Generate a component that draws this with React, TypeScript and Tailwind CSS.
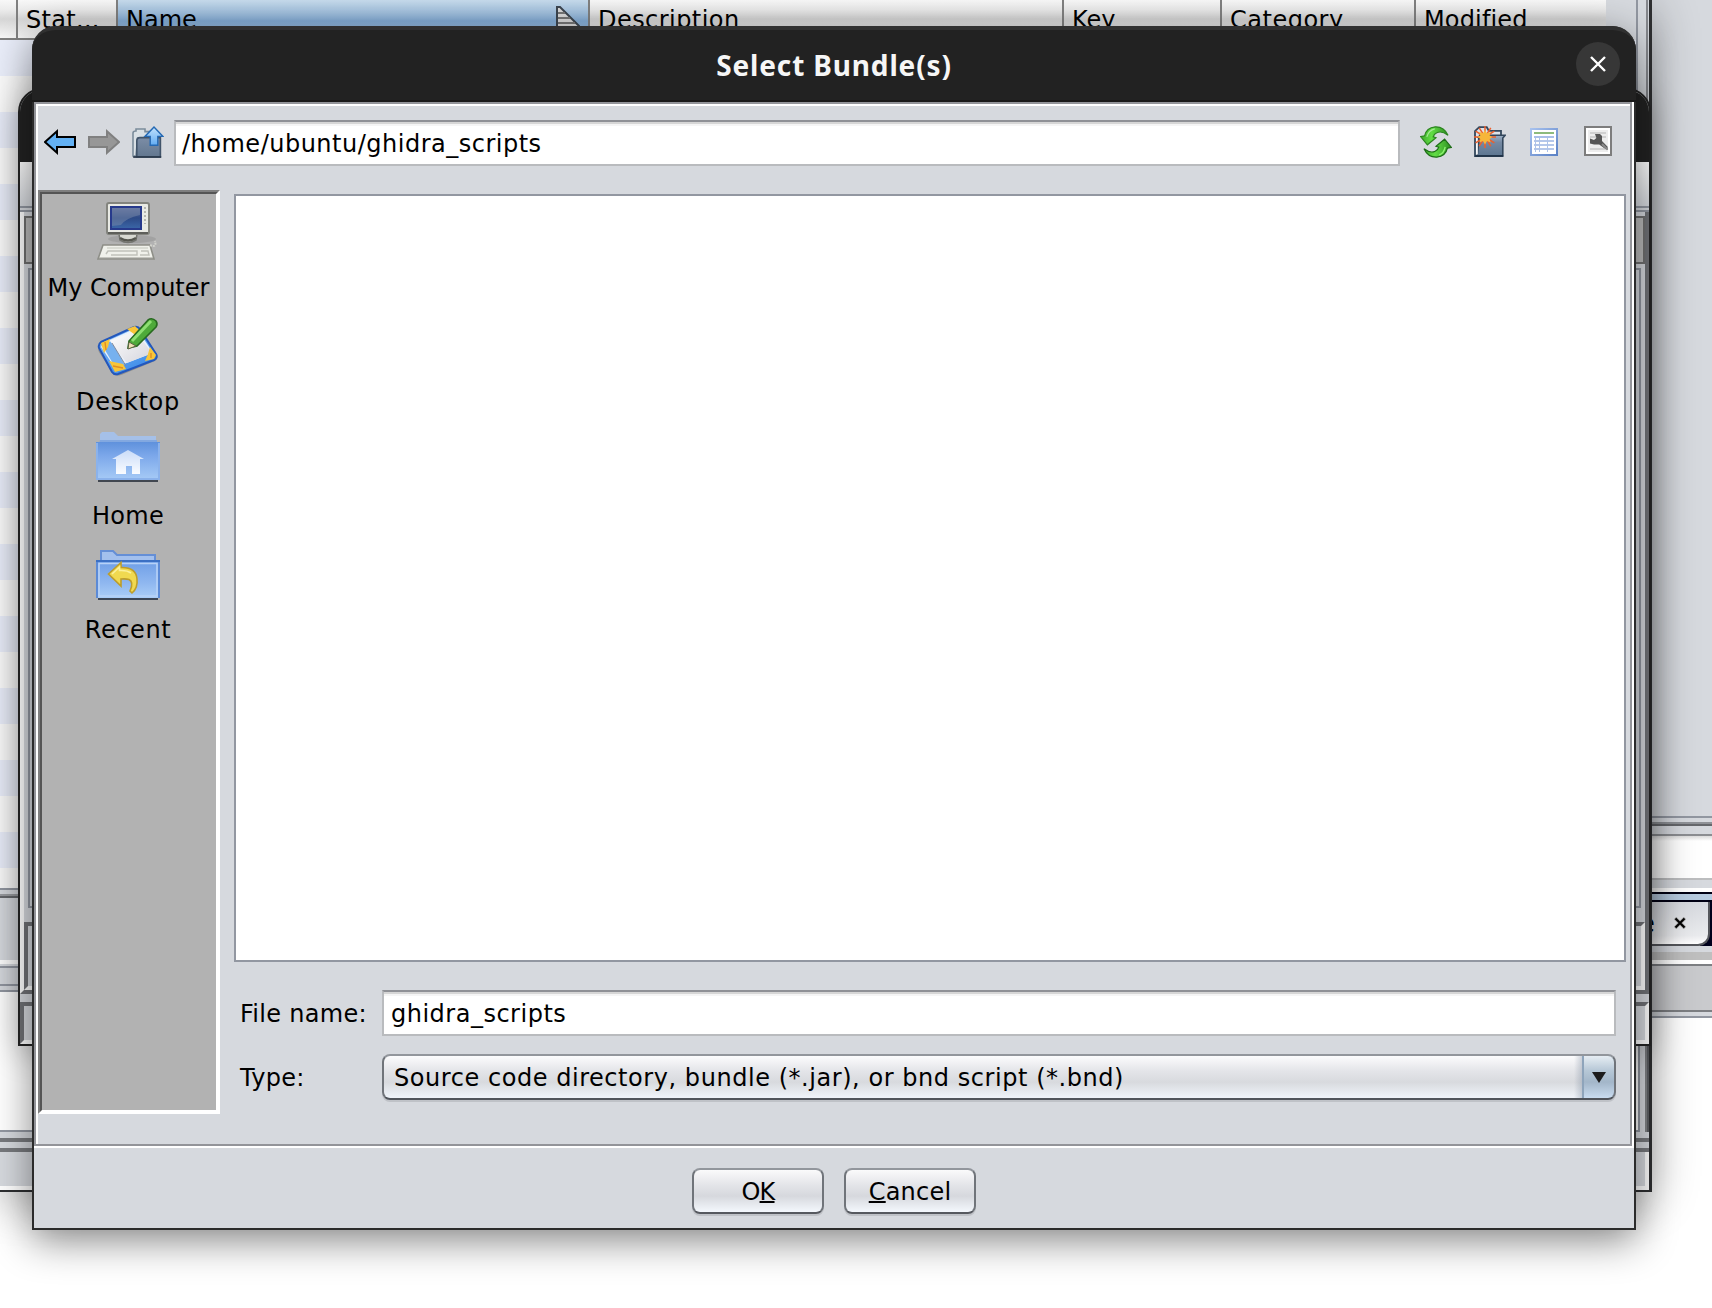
import React from "react";

function BackArrow() {
  return (
    <svg className="h-8 w-8 shrink-0" viewBox="0 0 16 16">
      <path d="M0.5 8 L6.5 2.6 V5.5 H15.5 V10.5 H6.5 V13.4 Z" fill="#63b1f4" stroke="#000" strokeWidth="1" />
    </svg>
  );
}

function ForwardArrow() {
  return (
    <svg className="h-8 w-8 shrink-0" viewBox="0 0 16 16">
      <path d="M15.5 8 L9.5 2.6 V5.5 H0.5 V10.5 H9.5 V13.4 Z" fill="#979797" stroke="#808080" strokeWidth="1" />
    </svg>
  );
}

function UpFolder() {
  return (
    <svg className="h-8 w-8 shrink-0" viewBox="0 0 16 16">
      <defs>
        <linearGradient id="upf" x1="0" y1="0" x2="0" y2="1">
          <stop offset="0" stopColor="#7c8da6" />
          <stop offset="1" stopColor="#62778f" />
        </linearGradient>
        <linearGradient id="upa" x1="0" y1="0" x2="0" y2="1">
          <stop offset="0" stopColor="#c3e2fd" />
          <stop offset="1" stopColor="#62acf2" />
        </linearGradient>
      </defs>
      <path d="M0.5 15 V3.5 Q0.5 2.5 2 2.5 V1.5 H6.5 V2.8 H12 V6 H2.8 L2 15 Z" fill="#d9e0e5" stroke="#7b8c9b" strokeWidth="0.8" />
      <path d="M2.4 15.4 V7.5 Q2.4 5.8 4 5.8 H14.2 V15.4 Z" fill="url(#upf)" stroke="#41546a" strokeWidth="0.8" />
      <path d="M0.6 15.5 H14.6" stroke="#2c3b4d" strokeWidth="0.9" />
      <path d="M11 0.5 L15.5 5.2 H12.9 V9.6 H9.1 V5.2 H6.5 Z" fill="url(#upa)" stroke="#2569b3" strokeWidth="0.7" />
    </svg>
  );
}

function RefreshIcon() {
  return (
    <svg className="h-8 w-8 shrink-0" viewBox="0 0 16 16">
      <defs>
        <linearGradient id="rfa" x1="0" y1="0" x2="1" y2="0">
          <stop offset="0" stopColor="#3fa92c" />
          <stop offset="0.4" stopColor="#62dd45" />
          <stop offset="1" stopColor="#2f8f22" />
        </linearGradient>
      </defs>
      <path d="M0.3 5.3 L2.3 4.9 Q3.2 0.8 7.6 0.4 Q12 0.2 14 4.6 Q10.8 2.2 8.4 3.4 Q7 4 6.6 5.4 L8 5.9 L3.7 9.4 Z" fill="url(#rfa)" stroke="#2c8420" strokeWidth="0.6" />
      <path d="M15.7 10.7 L13.7 11.1 Q12.8 15.2 8.4 15.6 Q4 15.8 2 11.4 Q5.2 13.8 7.6 12.6 Q9 12 9.4 10.6 L8 10.1 L12.3 6.6 Z" fill="url(#rfa)" stroke="#1d6d16" strokeWidth="0.6" />
      <path d="M3.4 5.4 Q4.4 2 7.4 1.4" fill="none" stroke="#a6e896" strokeWidth="0.6" />
      <path d="M12.6 10.4 Q12 13.6 9.6 14.4" fill="none" stroke="#8cf36e" strokeWidth="0.7" />
    </svg>
  );
}

function NewFolder() {
  return (
    <svg className="h-8 w-8 shrink-0" viewBox="0 0 16 16">
      <defs>
        <linearGradient id="nff" x1="0" y1="0" x2="0" y2="1">
          <stop offset="0" stopColor="#9db0c6" />
          <stop offset="0.35" stopColor="#7589a2" />
          <stop offset="1" stopColor="#5c7590" />
        </linearGradient>
      </defs>
      <path d="M0.5 15 V2.6 L2.6 0.6 H6.4 L7.4 2.4 H13.5 V6 H2 V15 Z" fill="#dde3e9" stroke="#33475c" strokeWidth="0.9" />
      <path d="M1.6 15 L2.8 4.6 H15.6 L14.4 6 V15 Z" fill="url(#nff)" stroke="#33475c" strokeWidth="0.8" />
      <path d="M0.6 15 H14.6" stroke="#1f3247" strokeWidth="0.9" />
      <path d="M1.5 14.3 V6" stroke="#fff" strokeWidth="0.8" />
      <path
        d="M5.5 5.5 L5.5 0 M5.5 5.5 L5.5 11 M5.5 5.5 L0 5.5 M5.5 5.5 L11 5.5 M5.5 5.5 L2.6 0.9 M5.5 5.5 L8.4 0.9 M5.5 5.5 L2.6 10.1 M5.5 5.5 L8.4 10.1 M5.5 5.5 L0.8 2.6 M5.5 5.5 L10.2 2.6 M5.5 5.5 L0.8 8.4 M5.5 5.5 L10.2 8.4"
        stroke="#ee5f2b"
        strokeWidth="0.75"
      />
      <path d="M5.5 2 L6.5 3.6 L8.4 2.9 L7.8 4.7 L9.2 5.5 L7.8 6.5 L8.3 8.2 L6.5 7.5 L5.5 9.2 L4.5 7.5 L2.7 8.2 L3.2 6.5 L1.8 5.5 L3.2 4.7 L2.6 2.9 L4.5 3.6 Z" fill="#f6b63a" />
    </svg>
  );
}

function ListIcon() {
  return (
    <svg className="h-8 w-8 shrink-0" viewBox="0 0 16 16" shapeRendering="crispEdges">
      <defs>
        <linearGradient id="lst" x1="0" y1="0" x2="1" y2="1">
          <stop offset="0" stopColor="#a9c3ef" />
          <stop offset="1" stopColor="#587fc4" />
        </linearGradient>
      </defs>
      <rect x="1" y="1" width="14" height="14" fill="url(#lst)" />
      <rect x="2" y="2" width="12" height="12" fill="#fff" />
      <rect x="3" y="3" width="10" height="1" fill="#8dbb7c" />
      <path d="M3 7.5 H13 M3 9.5 H13 M3 11.5 H13" stroke="#b4c7ea" strokeWidth="1" />
      <path d="M3.5 5 V13 M5.5 5 V13 M9.5 5 V13" stroke="#aec3e8" strokeWidth="0.5" />
      <rect x="3" y="5" width="10" height="1" fill="#a9bfe8" />
    </svg>
  );
}

function OptionsIcon() {
  return (
    <svg className="h-8 w-8 shrink-0" viewBox="0 0 16 16">
      <rect x="1.5" y="0.5" width="13" height="14" fill="#fff" stroke="#7d7d7d" strokeWidth="1" />
      <rect x="3" y="2" width="10" height="11" fill="#ededed" />
      <path d="M4 3.5 H12 M4 5.5 H12 M4 11.5 H12" stroke="#c6c6c6" strokeWidth="0.8" />
      <path d="M6.5 4 H9 L10 5 V7.5 L12.8 10.4 V12 L11 11 L8.6 9.2 H6 L4 8.8 V6.2 L6 7 L7.2 6 Z" fill="#555" />
      <path d="M10 9 L12.8 11.8" stroke="#8b8b8b" strokeWidth="1" />
    </svg>
  );
}

function ComputerIcon() {
  return (
    <svg className="h-16 w-16" viewBox="0 0 64 64">
      <defs>
        <linearGradient id="scr" x1="0" y1="0" x2="0" y2="1">
          <stop offset="0" stopColor="#5c6c9c" />
          <stop offset="0.5" stopColor="#2d4a86" />
          <stop offset="1" stopColor="#3b67a8" />
        </linearGradient>
      </defs>
      <ellipse cx="36" cy="41" rx="24" ry="4" fill="#989898" opacity="0.6" />
      <path d="M23 36 H41 L40 42 Q32 47 24 42 Z" fill="#d7d8d1" stroke="#73746f" strokeWidth="1.5" />
      <path d="M24 40 Q32 45 40 40" fill="none" stroke="#55564f" strokeWidth="2.5" />
      <rect x="11" y="5" width="42" height="31" rx="2" fill="#e9eae4" stroke="#83847e" strokeWidth="2" />
      <path d="M12 35 H52" stroke="#5e5f5a" strokeWidth="2" />
      <rect x="15" y="9" width="30" height="22" fill="url(#scr)" stroke="#273a8c" strokeWidth="2" />
      <path d="M16 10 H44 V17 Q30 20 25 27 L16 28 Z" fill="#8393ae" opacity="0.45" />
      <path d="M49 9 V26" stroke="#b5b6b0" strokeWidth="2" strokeDasharray="2 2" />
      <path d="M7 47 H54 L58 61 H2 Z" fill="#f0f1eb" stroke="#8e8f88" strokeWidth="1.6" />
      <path d="M11 50 H52" stroke="#d3d4cd" strokeWidth="1.6" />
      <path d="M10 56 L12 53 H41 V57 H15 M45 53 H52 L53 57 H44" fill="none" stroke="#c0c1ba" strokeWidth="1.4" />
      <path d="M3 60.5 H57" stroke="#999a94" strokeWidth="2" />
      <path d="M54 47 Q61 50 59 43" fill="none" stroke="#d2d3cd" strokeWidth="2" strokeDasharray="2 1" />
    </svg>
  );
}

function DesktopIcon() {
  return (
    <svg className="h-16 w-16" viewBox="0 0 64 64">
      <defs>
        <linearGradient id="dsk" x1="0" y1="0" x2="0.7" y2="1">
          <stop offset="0" stopColor="#8cbcf2" />
          <stop offset="1" stopColor="#3a8bea" />
        </linearGradient>
        <linearGradient id="pap" x1="0" y1="0" x2="1" y2="1">
          <stop offset="0" stopColor="#ffffff" />
          <stop offset="1" stopColor="#d4d4dc" />
        </linearGradient>
      </defs>
      <path d="M5 34 L40 16 Q43 15 45 18 L61 42 Q63 46 59 49 L25 63 Q20 65 17 62 L3 40 Q1 36 5 34 Z" fill="#6b6b6b" opacity="0.5" />
      <path d="M5 30 L38 15 Q42 14 44 17 L60 42 Q62 46 58 48 L22 62 Q18 63 16 60 L3 36 Q2 32 5 30 Z" fill="url(#dsk)" stroke="#2257bd" strokeWidth="2" />
      <path d="M7 31 L38 17 L42 18 L57 41 L20 55 L17 53 L5 35 Z" fill="#e8f1fc" />
      <path d="M6 33 L15 29 L29 53 L19 55 Z" fill="#76b1ef" />
      <path d="M14 29 L39 19 L56 41 L31 51 Z" fill="url(#pap)" />
      <path d="M16 31 L30 54" stroke="#818a9c" strokeWidth="1" />
      <path d="M5 31 L14 27 L12 35 L8 41 Z M31 17 L39 14 L45 20 L38 22 Z M54 35 L60 43 L58 47 L49 49 L52 42 Z M13 49 L27 52 L30 57 L19 60 Z" fill="#f8c538" />
      <path d="M9 30 L10 38 M17 54 L27 56 M55 41 L55 46" stroke="#df8e24" strokeWidth="1.4" />
      <path d="M32 36 L33 29 L52 8 Q56 5 60 9 Q62 12 60 15 L41 34 Z" fill="#4eaa3a" stroke="#286a20" strokeWidth="1.6" />
      <path d="M36 29 L55 9" stroke="#8edf73" strokeWidth="3" />
      <path d="M32 37 L33 30 L40 34 Z" fill="#efe1b5" stroke="#5b6040" strokeWidth="1" />
    </svg>
  );
}

function HomeFolder() {
  return (
    <svg className="h-16 w-16" viewBox="0 0 64 64">
      <defs>
        <linearGradient id="hf" x1="0" y1="0" x2="0" y2="1">
          <stop offset="0" stopColor="#5f91dc" />
          <stop offset="0.35" stopColor="#7ba7ea" />
          <stop offset="1" stopColor="#a7cbf6" />
        </linearGradient>
        <linearGradient id="hh" x1="0" y1="0" x2="0" y2="1">
          <stop offset="0" stopColor="#cadcf8" />
          <stop offset="1" stopColor="#fafcff" />
        </linearGradient>
      </defs>
      <path d="M4 16 V8 L6 6 H18 L22 10 H60 V18 H4 Z" fill="#a5c0e8" />
      <path d="M4 14 H61 V18 H3 Z" fill="#82a8e0" />
      <rect x="2" y="54" width="60" height="2" fill="#414750" />
      <rect x="0" y="16" width="64" height="38" fill="url(#hf)" />
      <path d="M1 17 V53 H63 V17" fill="none" stroke="#8bb2eb" strokeWidth="2" />
      <path d="M32 24 L48 33 H44 V48 H36 V40 H30 V48 H20 V33 H16 Z" fill="url(#hh)" />
    </svg>
  );
}

function RecentFolder() {
  return (
    <svg className="h-16 w-16" viewBox="0 0 64 64">
      <defs>
        <linearGradient id="rcf" x1="0" y1="0" x2="0" y2="1">
          <stop offset="0" stopColor="#6d9de6" />
          <stop offset="0.6" stopColor="#8fb7f0" />
          <stop offset="1" stopColor="#aacdf7" />
        </linearGradient>
      </defs>
      <path d="M5 22 V11 H17 L21 15 H59 V22 Z" fill="#a3c0ed" stroke="#658fd6" strokeWidth="2" />
      <rect x="2" y="58" width="60" height="2" fill="#3c4656" />
      <rect x="0" y="20" width="64" height="38" fill="url(#rcf)" />
      <path d="M1 58 V21 H63 V58" fill="none" stroke="#5b8ad6" strokeWidth="2" />
      <rect x="0" y="20" width="64" height="2" fill="#3b70c4" />
      <path d="M3 56 V23.5 H61 V56 Z" fill="none" stroke="#b7d2f7" strokeWidth="1.6" />
      <path d="M12.5 34 L25 22.5 V27.5 Q40 27 41 39 Q42 48 36 53 L34 51 Q38 42 33 39.5 Q30 38.5 25 39 V46 Z" fill="#f0d950" stroke="#bd9d2a" strokeWidth="1.6" />
      <path d="M16 34 L23.5 27 V30.5 Q31 30 35 33" fill="none" stroke="#fbf19d" strokeWidth="1.6" />
    </svg>
  );
}

const columns = [
  { label: "Stat...", cls: "w-[100px] pl-2 border-r-2 border-[#808080] tracking-[0.3px]" },
  { label: "Name", cls: "w-[472px] pl-2 border-r-2 border-[#808080] bg-[linear-gradient(#c8dced,#a0c0df_36%,#86afd8_55%,#a9cdf0)]", sorted: true },
  { label: "Description", cls: "w-[474px] pl-2 border-r-2 border-[#808080] tracking-[0.45px]" },
  { label: "Key", cls: "w-[158px] pl-2 border-r-2 border-[#808080]" },
  { label: "Category", cls: "w-[194px] pl-2 border-r-2 border-[#808080] tracking-[0.5px]" },
  { label: "Modified", cls: "w-[190px] pl-2 tracking-[0.15px]" },
];

function MainWindow() {
  return (
    <div className="absolute top-0 left-[1600px] flex h-[1308px] w-[112px] flex-col bg-white">
      <div className="h-[816px] shrink-0 bg-[#d6d9de]" />
      <div className="h-[6px] shrink-0 border-t-2 border-[#9297a1] bg-[#d6d9de]" />
      <div className="h-[4px] shrink-0 border-t-2 border-b-2 border-t-[#8f9297] border-b-[#66686c]" />
      <div className="h-[8px] shrink-0 bg-[#d6d9de]" />
      <div className="h-[46px] shrink-0 border-t-2 border-b-2 border-t-[#8c8e92] border-b-[#bcbdbf] bg-[linear-gradient(#dcdcdc,#fff_5px)]" />
      <div className="h-[8px] shrink-0 bg-[#d6d9de]" />
      <div className="h-[4px] shrink-0 bg-white" />
      <div className="h-[10px] shrink-0 border-y-2 border-[#000014] bg-[#b7cbe0]" />
      <div className="flex h-[44px] shrink-0 bg-[linear-gradient(90deg,#d6d9de_100px,#00001c_100px)]">
        <div className="flex w-[110px] items-center rounded-br-xl border-r-2 border-b-2 border-[#55575c] bg-[linear-gradient(#d6d9de,#eaebee_80%,#fff)] pl-[40px] text-2xl leading-none">
          <span className="mt-0.5">e</span>
          <svg className="mb-px ml-[19px] h-3 w-3" viewBox="0 0 12 12">
            <path d="M1 1 L11 11 M11 1 L1 11" stroke="#aaa" strokeWidth="3.6" />
            <path d="M1.5 1.5 L10.5 10.5 M10.5 1.5 L1.5 10.5" stroke="#000" strokeWidth="2" />
          </svg>
        </div>
      </div>
      <div className="h-[6px] shrink-0 bg-[#d6d9de]" />
      <div className="h-[8px] shrink-0 bg-[#bfbfbf]" />
      <div className="h-[4px] shrink-0 bg-white" />
      <div className="h-[48px] shrink-0 border-y-2 border-[#7d7f83] bg-[#c9cacd]" />
      <div className="h-[6px] shrink-0 border-b-2 border-[#9297a1] bg-[#d6d9de]" />
    </div>
  );
}

function ScriptManager() {
  return (
    <div className="absolute top-0 left-0 flex h-[1192px] w-[1652px] flex-col overflow-hidden border-r-[3px] border-b-2 border-[#2e2f31] bg-[#d6d9de]">
      <div className="flex h-[888px] shrink-0">
        <div className="flex w-[1638px] flex-col border-r-2 border-[#9297a1]">
          <div className="flex h-[40px] w-[1606px] shrink-0 border-b-2 border-[#808080] bg-[linear-gradient(#f8f8f8,#ececec_25%,#d6d6d6_50%,#f8f8f8)] text-2xl leading-none">
            <div className="w-[18px] border-r-2 border-[#808080]" />
            {columns.map((c) => (
              <div key={c.label} className={`${c.cls} flex h-[38px] shrink-0 justify-between pt-2 whitespace-nowrap`}>
                <span>{c.label}</span>
                {c.sorted && (
                  <svg className="-mt-0.5 mr-2 h-6 w-6" viewBox="0 0 24 24">
                    <path d="M1 1 H4 L23 20 V23 H1 Z" fill="#dcdcdc" stroke="#3d4650" strokeWidth="2" />
                    <path d="M2 7 H9 M2 12 H14 M2 17 H19" stroke="#777" strokeWidth="2" />
                  </svg>
                )}
              </div>
            ))}
          </div>
          <div className="flex-1 bg-[repeating-linear-gradient(#e9edf9_0px,#e9edf9_36px,#fafafa_36px,#fafafa_72px)]" />
        </div>
        <div className="ml-2 w-[2px] bg-[#85878c]" />
      </div>
      <div className="h-[6px] shrink-0 border-t-2 border-[#9297a1]" />
      <div className="h-[4px] shrink-0 border-y-2 border-t-[#9a9ca0] border-b-[#66686c]" />
      <div className="h-[62px] shrink-0" />
      <div className="h-[4px] shrink-0 bg-white" />
      <div className="h-[4px] shrink-0 border-b-2 border-[#9297a1]" />
      <div className="h-[18px] shrink-0 border-b-2 border-[#9297a1]" />
      <div className="h-[6px] shrink-0 border-b-2 border-[#9297a1]" />
      <div className="flex h-[140px] shrink-0">
        <div className="w-[1640px] border-r-2 border-b-2 border-[#9297a1] bg-white" />
        <div className="flex-1" />
        <div className="w-[4px] border-x-2 border-l-[#808285] border-r-[#5c5e62]" />
      </div>
      <div className="h-[10px] shrink-0 border-b-4 border-[#77797d]" />
      <div className="h-[10px] shrink-0 border-b-4 border-[#77797d]" />
      <div className="flex-1 border-r-4 border-b-4 border-white" />
    </div>
  );
}

function BundleManager() {
  return (
    <div className="absolute top-[88px] left-[18px] flex h-[958px] w-[1633px] flex-col overflow-hidden rounded-t-3xl border-2 border-[#242424] bg-[#d6d9de] shadow-[0_6px_32px_rgba(0,0,0,0.28)]">
      <div className="h-[72px] shrink-0 bg-[#222]" />
      <div className="h-[44px] shrink-0 bg-[linear-gradient(#fff,#d6d9de)]" />
      <div className="h-[6px] shrink-0 border-y-2 border-[#9297a1]" />
      <div className="flex h-[782px] shrink-0 flex-col border-r-4 border-b-4 border-l-4 border-r-[#707276] border-b-[#707276] border-l-white">
        <div className="mt-1 h-[48px] shrink-0 border-2 border-[#707070] bg-[#bcbcbc]" />
        <div className="mx-1 mt-1 h-[640px] shrink-0 border-2 border-[#9297a1]" />
        <div className="mt-[14px] h-[68px] border-4 border-[#707276] border-r-white border-b-white" />
      </div>
      <div className="mt-[8px] h-[42px] shrink-0 border-4 border-[#707276] border-r-white border-b-white" />
    </div>
  );
}

const places = [
  { label: "My Computer", icon: <ComputerIcon />, cls: "pl-px" },
  { label: "Desktop", icon: <DesktopIcon />, cls: "tracking-[0.7px]" },
  { label: "Home", icon: <HomeFolder />, cls: "tracking-[0.3px]" },
  { label: "Recent", icon: <RecentFolder />, cls: "tracking-[0.6px]" },
];

function Field({ value, className }: { value: string; className: string }) {
  return (
    <div className={`${className} flex h-[46px] items-center border-2 border-[#b9bbbe] border-t-[#8f9196] bg-[linear-gradient(#d6d6d6_2px,#f5f5f5_2px,#f5f5f5_4px,#fff_4px)] pt-0.5 tracking-[0.5px] whitespace-nowrap`}>
      {value}
    </div>
  );
}

const buttonClass =
  "flex h-[46px] w-[132px] items-center justify-center rounded-lg border-2 border-[#70747a] border-t-[#92969c] border-b-[#56595f] bg-[linear-gradient(#fafafb,#e4e5e9_35%,#d6d8dd_62%,#f4f8fd)] pt-0.5 shadow-[0_2px_0_#bfc2c7]";

const mnemonicClass = "underline decoration-2 underline-offset-[1px] [text-decoration-skip-ink:none]";

function FileChooser() {
  return (
    <div className="absolute top-[26px] left-[32px] flex h-[1204px] w-[1604px] flex-col rounded-t-[24px] bg-[#2b2b2b] p-0.5 pt-0 text-2xl leading-none shadow-[0_10px_40px_rgba(0,0,0,0.48)]">
      <div className="-mx-0.5 flex h-[76px] shrink-0 items-center rounded-t-[24px] border-t-4 border-b-2 border-t-[#303030] border-b-[#191919] bg-[#222]">
        <div className="w-[60px]" />
        <h1 className="flex-1 text-center font-['Noto_Sans'] text-[28px] leading-none font-bold tracking-[0.85px] text-[#f6f6f6]">
          Select Bundle(s)
        </h1>
        <div className="mr-4 mb-0.5 flex h-11 w-11 items-center justify-center rounded-full bg-[#373737]">
          <svg className="h-4 w-4" viewBox="0 0 16 16">
            <path d="M1 1 L15 15 M15 1 L1 15" stroke="#fff" strokeWidth="2.4" />
          </svg>
        </div>
      </div>

      <div className="flex h-[1044px] shrink-0 bg-white pr-0.5">
        <div className="flex flex-1 flex-col border-2 border-[#939499] bg-[#d6d9de]">
          <div className="flex h-[86px] shrink-0 border-t-2 border-l-2 border-white">
            <div className="flex flex-1 items-start pt-[14px] pl-1.5">
              <div className="flex gap-3 pt-1.5">
                <BackArrow />
                <ForwardArrow />
                <UpFolder />
              </div>
              <Field className="ml-[10px] w-[1226px] pl-1.5" value="/home/ubuntu/ghidra_scripts" />
              <div className="ml-5 flex gap-[22px] pt-1.5">
                <RefreshIcon />
                <NewFolder />
                <ListIcon />
                <OptionsIcon />
              </div>
            </div>
          </div>

          <div className="flex flex-1 border-l-2 border-white">
            <div className="h-[924px] w-[182px] shrink-0 border-2 border-[#7f7f7f] border-r-white border-b-white">
              <div className="flex h-full flex-col border-2 border-[#555] border-r-white border-b-white bg-[#b2b2b2] pt-1 pr-0.5">
                {places.map((p) => (
                  <div key={p.label} className="flex h-[114px] shrink-0 flex-col items-center">
                    {p.icon}
                    <span className={`${p.cls} mt-3 leading-7 whitespace-nowrap`}>{p.label}</span>
                  </div>
                ))}
              </div>
            </div>

            <div className="flex flex-1 flex-col pt-1 pr-1 pl-[14px]">
              <div className="h-[768px] shrink-0 border-2 border-[#9297a1] bg-white" />
              <div className="mt-7 flex items-center pr-[10px] pl-1.5">
                <label className="w-[142px] pt-0.5 tracking-[0.3px] whitespace-nowrap">File name:</label>
                <Field className="flex-1 pl-[7px]" value="ghidra_scripts" />
              </div>
              <div className="mt-[18px] flex items-center pr-[10px] pl-1.5">
                <label className="w-[142px] pt-0.5 tracking-[0.3px]">Type:</label>
                <div className="flex h-[46px] flex-1 overflow-hidden rounded-lg border-2 border-[#70747a] border-t-[#92969c] border-b-[#50545b] bg-[linear-gradient(#fcfcfd,#e4e5e9_35%,#d8dade_62%,#f0f4fa)] shadow-[0_2px_0_#bfc2c7]">
                  <span className="flex flex-1 items-center pt-0.5 pl-[10px] tracking-[0.55px] whitespace-nowrap">
                    Source code directory, bundle (*.jar), or bnd script (*.bnd)
                  </span>
                  <div className="w-[8px] bg-[linear-gradient(90deg,transparent,rgba(120,135,155,0.35))]" />
                  <div className="-my-0.5 -mr-0.5 flex w-[34px] items-center justify-center rounded-r-lg border-2 border-t-[#6a7f92] border-r-[#2f455c] border-b-[#22364c] border-l-[#8ea4bb] bg-[linear-gradient(#e6edf3,#b6c7d6_35%,#a3b6c9_62%,#c9dcf0)]">
                    <svg className="h-[11px] w-[14px]" viewBox="0 0 14 11">
                      <path d="M0 0 H14 L7 11 Z" fill="#1c1c1c" />
                    </svg>
                  </div>
                </div>
              </div>
            </div>
          </div>
        </div>
      </div>

      <div className="flex flex-1 items-start justify-center gap-5 border-t-2 border-white bg-[#d6d9de] pt-5">
        <button className={buttonClass}>
          <span className="tracking-[-0.8px]">
            O<span className={mnemonicClass}>K</span>
          </span>
        </button>
        <button className={buttonClass}>
          <span className="tracking-[0.2px]">
            <span className={mnemonicClass}>C</span>ancel
          </span>
        </button>
      </div>
    </div>
  );
}

export default function App() {
  return (
    <div className="relative h-[1308px] w-[1712px] overflow-hidden bg-white font-['DejaVu_Sans',sans-serif] text-black">
      <MainWindow />
      <div className="absolute top-0 left-0 h-[1192px] w-[1652px] shadow-[0_6px_44px_rgba(0,0,0,0.32)]" />
      <ScriptManager />
      <BundleManager />
      <FileChooser />
    </div>
  );
}
